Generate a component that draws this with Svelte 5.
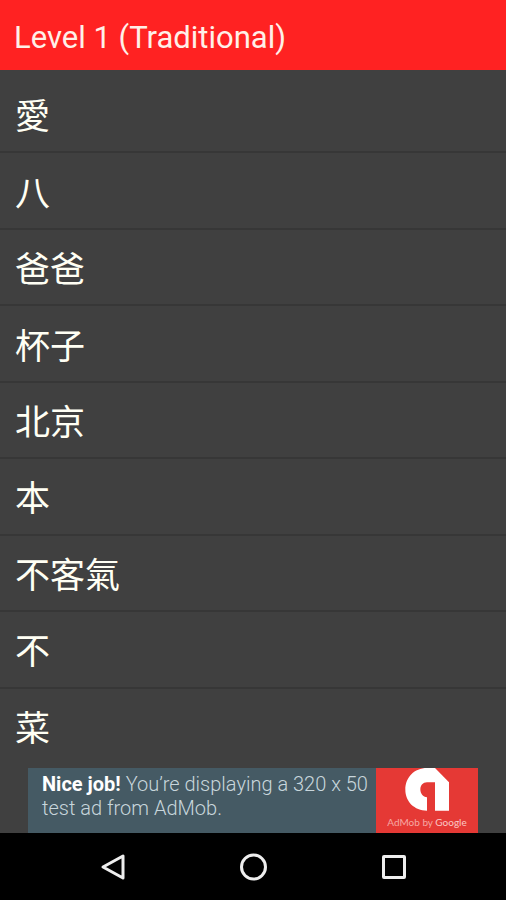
<script>
  const title = 'Level 1 (Traditional)';
  const words = ['愛', '八', '爸爸', '杯子', '北京', '本', '不客氣', '不', '菜'];
</script>

<div class="screen">
  <header>
    <h1>{title}</h1>
  </header>

  <main>
    <ul>
      {#each words as word}
        <li><button class="word" type="button">{word}</button></li>
      {/each}
    </ul>
  </main>

  <aside>
    <a class="ad" href="#admob">
      <p><strong>Nice job!</strong> <span>You’re displaying a 320 x 50 test ad from AdMob.</span></p>
      <span class="brand">
        <svg width="44" height="44" viewBox="0 0 132 132" aria-hidden="true">
          <path
            fill="#fff"
            d="M66 0H90L132 43V128H90V43H66C54 43 46 52 46 64C46 77 54 87 66 88V128C28 127 1 101 1 65C1 28 28 0 66 0Z"
          />
        </svg>
        <span class="by">AdMob by <b>Google</b></span>
      </span>
    </a>
  </aside>

  <nav aria-label="System">
    <button type="button" aria-label="Back">
      <svg width="28" height="28" viewBox="0 0 28 28">
        <path d="M4 14L24 3V25Z" />
      </svg>
    </button>
    <button type="button" aria-label="Home">
      <svg width="28" height="28" viewBox="0 0 28 28">
        <circle cx="14.5" cy="14" r="12" />
      </svg>
    </button>
    <button type="button" aria-label="Recent apps">
      <svg width="28" height="28" viewBox="0 0 28 28">
        <rect x="4.5" y="3.5" width="21" height="21" rx="0.5" />
      </svg>
    </button>
  </nav>
</div>

<style>
  :global(body) {
    margin: 0;
    background: #404040;
  }

  .screen {
    display: flex;
    flex-direction: column;
    min-height: 100vh;
    background: #404040;
    font-family: Roboto, 'Noto Sans CJK SC', sans-serif;
  }

  header {
    display: flex;
    align-items: center;
    height: 70px;
    padding: 6px 14px 0;
    box-sizing: border-box;
    background: #ff2222;
  }

  h1 {
    margin: 0;
    color: #fff0e8;
    font-size: 31px;
    font-weight: 400;
    line-height: 40px;
  }

  main {
    display: flex;
    flex: 1;
    padding: 7px 0 3px;
  }

  ul {
    display: flex;
    flex: 1;
    flex-direction: column;
    margin: 0;
    padding: 0;
    list-style: none;
  }

  li {
    display: flex;
    flex: 1;
    min-height: 64px;
    box-sizing: border-box;
    border-bottom: 2px solid #373737;
  }

  li:last-child {
    border-bottom-color: transparent;
  }

  .word {
    flex: 1;
    padding: 0 15px;
    border: 0;
    background: none;
    color: #fffff4;
    font-family: 'Noto Sans CJK SC', sans-serif;
    font-size: 35px;
    line-height: 52px;
    text-align: left;
  }

  aside {
    padding: 0 28px;
  }

  .ad {
    display: flex;
    height: 65px;
    background: #455a64;
    text-decoration: none;
  }

  p {
    flex: 1;
    margin: 0;
    padding: 4px 0 0 14px;
    color: #c8d6dc;
    font-size: 20px;
    font-weight: 300;
    line-height: 24px;
  }

  strong {
    color: #fff;
    font-weight: 700;
  }

  .brand {
    display: flex;
    flex: 0 0 102px;
    flex-direction: column;
    align-items: center;
    background: #e53935;
    color: #f6a8a4;
  }

  .by {
    font-family: Lato, sans-serif;
    font-size: 10px;
    line-height: 20px;
    white-space: nowrap;
  }

  .by b {
    font-weight: 400;
    color: #fbc8c5;
  }

  nav {
    display: flex;
    height: 67px;
    padding: 0 43px;
    background: #000;
  }

  nav button {
    display: flex;
    flex: 1;
    align-items: center;
    justify-content: center;
    padding: 0;
    border: 0;
    background: none;
  }

  nav svg {
    fill: none;
    stroke: #eee;
    stroke-width: 3;
    stroke-linejoin: round;
  }
</style>
